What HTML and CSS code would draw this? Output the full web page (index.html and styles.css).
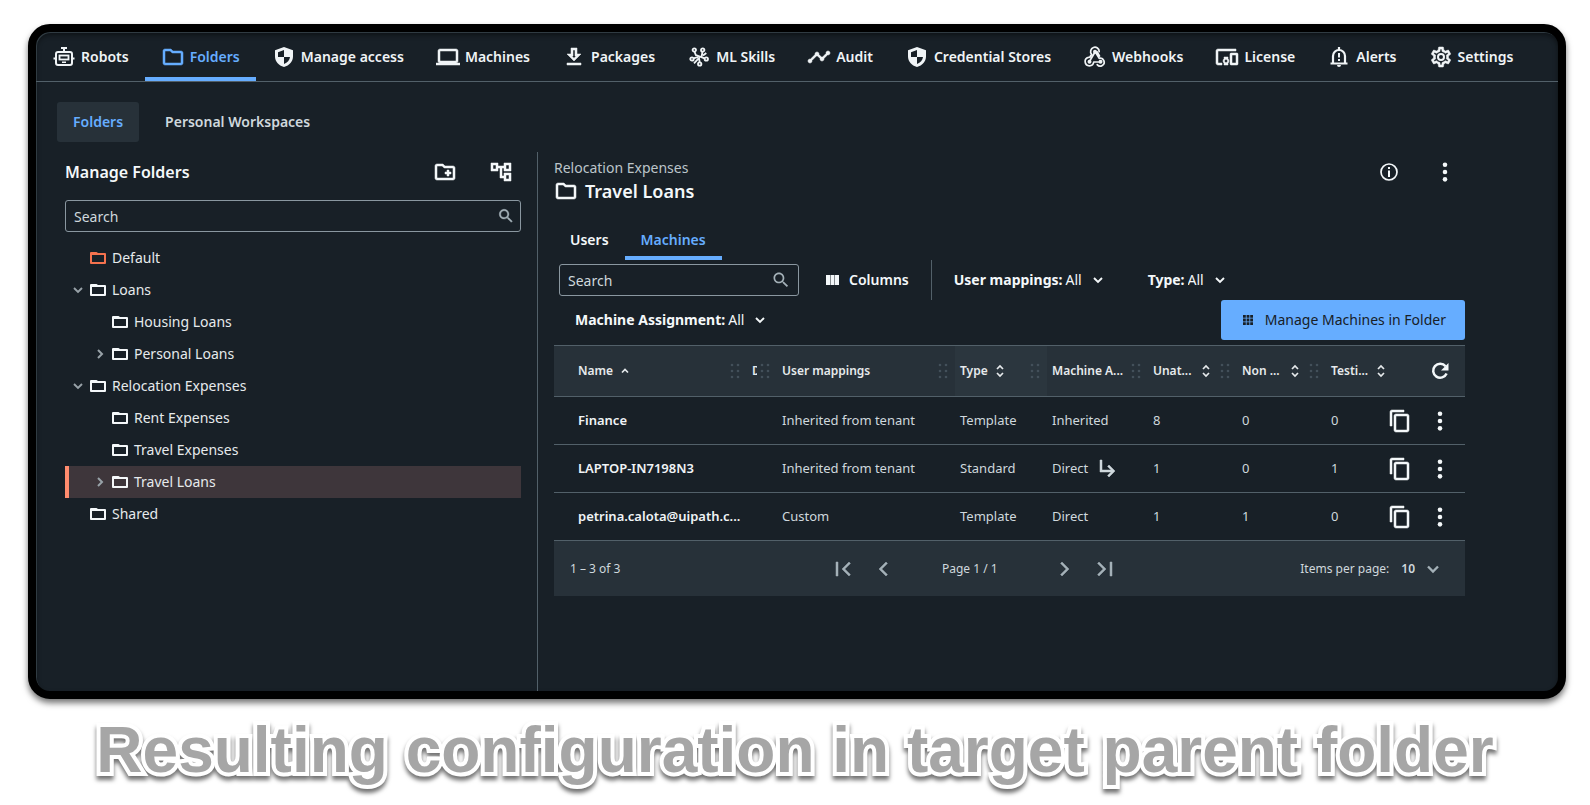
FILE: index.html
```
<!DOCTYPE html>
<html lang="en">
<head>
<meta charset="utf-8">
<title>Folders</title>
<link rel="stylesheet" href="styles.css">
</head>
<body>
<svg class="sprite" aria-hidden="true">
  <symbol id="robot" viewBox="0 0 24 24"><g fill="none" stroke="currentColor" stroke-width="2"><path d="M9 3h6M12 3v4"/><rect x="4" y="7" width="16" height="13" rx="2"/><path d="M1.500 13.500H4M20 13.500h2.500"/><rect x="7.500" y="10.500" width="9" height="4" stroke-width="1.800"/></g><path d="M10 16.500h4V18h-4z" fill="currentColor"/></symbol>
  <symbol id="folder" viewBox="0 0 24 24"><path fill="currentColor" d="M9.170 6l2 2H20v10H4V6h5.170M10 4H4c-1.100 0-1.990.9-1.990 2L2 18c0 1.100.9 2 2 2h16c1.100 0 2-.9 2-2V8c0-1.100-.9-2-2-2h-8l-2-2z"/></symbol>
  <symbol id="folder-small" viewBox="0 0 16 12"><path fill="currentColor" fill-rule="evenodd" d="M0 1a1 1 0 0 1 1-1h5.500l1.500 1h7a1 1 0 0 1 1 1V11a1 1 0 0 1-1 1H1a1 1 0 0 1-1-1zM2 3v7h12V3z"/></symbol>
  <symbol id="shield" viewBox="0 0 24 24"><path fill="currentColor" fill-rule="evenodd" d="M12 2l9 3.200v6.300c0 5-3.600 9-9 10.500-5.400-1.500-9-5.500-9-10.500V5.200zM12 5L6 7.200V12h6zM12 12v7c3.500-1.300 5.600-3.800 6-7z"/></symbol>
  <symbol id="laptop" viewBox="0 0 24 24"><path fill="currentColor" d="M20 18c1.100 0 1.990-.9 1.990-2L22 6c0-1.100-.9-2-2-2H4c-1.100 0-2 .9-2 2v10c0 1.100.9 2 2 2H0v2h24v-2h-4zM4 6h16v10H4V6z"/></symbol>
  <symbol id="download" viewBox="0 0 24 24"><path fill="currentColor" d="M19 9h-4V3H9v6H5l7 7 7-7zm-8 2V5h2v6h1.170L12 13.170 9.830 11H11zm-6 7h14v2H5z"/></symbol>
  <symbol id="skills" viewBox="0 0 24 24"><g fill="none" stroke="currentColor" stroke-width="1.800"><circle cx="7.300" cy="5" r="1.700"/><circle cx="15.700" cy="5" r="1.700"/><circle cx="5" cy="14" r="1.700"/><circle cx="19.300" cy="14" r="1.700"/><circle cx="12.700" cy="19" r="1.700"/><path d="M7.500 6.600l1.300 3.400 8.800 3.400M15.500 6.700l-1 5.300M6.600 13.400l4.400-1.600M12.700 17.300l-.7-4.300-5 5.300M19.300 8l-3.300 2.500"/></g></symbol>
  <symbol id="timeline" viewBox="0 0 24 24"><path fill="currentColor" d="M23 8c0 1.100-.9 2-2 2-.18 0-.35-.02-.51-.07l-3.560 3.550c.05.16.07.34.07.52 0 1.100-.9 2-2 2s-2-.9-2-2c0-.18.02-.36.07-.52l-2.550-2.550c-.16.05-.34.07-.52.07s-.36-.02-.52-.07l-4.550 4.560c.05.16.07.33.07.51 0 1.100-.9 2-2 2s-2-.9-2-2 .9-2 2-2c.18 0 .35.02.51.07l4.560-4.550C8.020 9.360 8 9.180 8 9c0-1.100.9-2 2-2s2 .9 2 2c0 .18-.02.36-.07.52l2.550 2.550c.16-.05.34-.07.52-.07s.36.02.52.07l3.550-3.560C19.020 8.350 19 8.180 19 8c0-1.100.9-2 2-2s2 .9 2 2z"/></symbol>
  <symbol id="webhook" viewBox="0 0 24 24"><g fill="none" stroke="currentColor" stroke-width="1.700" stroke-linecap="round" stroke-linejoin="round"><path d="M8.600 9.300a4.300 4.300 0 1 1 7.600-2.700M13 8l3.200 5.400a3.900 3.900 0 1 1-2 6.200M15.500 17H10.700a4.300 4.300 0 1 1-5.200-4.700M11.300 8.200l-4 6.800M8.600 9.300l-1.800 3M14 6.700l2.500 4.300"/></g><g fill="currentColor"><circle cx="12" cy="6.700" r="2"/><circle cx="6.500" cy="16.700" r="2"/><circle cx="17.500" cy="16.700" r="2"/></g></symbol>
  <symbol id="license" viewBox="0 0 24 24"><path fill="currentColor" d="M3 6h18V4H3c-1.100 0-2 .9-2 2v12c0 1.100.9 2 2 2h4v-2H3V6zm10 6H9v1.780c-.61.55-1 1.330-1 2.220s.39 1.670 1 2.220V20h4v-1.780c.61-.55 1-1.340 1-2.220s-.39-1.670-1-2.220V12zm-2 5.500c-.83 0-1.500-.67-1.500-1.500s.67-1.500 1.500-1.500 1.500.67 1.500 1.500-.67 1.500-1.500 1.500zM22 8h-6c-.5 0-1 .5-1 1v10c0 .5.5 1 1 1h6c.5 0 1-.5 1-1V9c0-.5-.5-1-1-1zm-1 10h-4v-8h4v8z"/></symbol>
  <symbol id="bell" viewBox="0 0 24 24"><path d="M6 18v-7a6 6 0 0 1 12 0v7M3.500 18.500h17M12 2v3" fill="none" stroke="currentColor" stroke-width="2.200"/><path fill="currentColor" d="M10 20h4a2 2 0 0 1-4 0zM11 8h2v4.500h-2zM11 14h2v2h-2z"/></symbol>
  <symbol id="gear" viewBox="0 0 24 24"><path fill="currentColor" d="M19.430 12.980c.04-.32.07-.64.07-.98 0-.34-.03-.66-.07-.98l2.110-1.650c.19-.15.24-.42.12-.64l-2-3.460c-.09-.16-.26-.25-.44-.25-.06 0-.12.01-.17.03l-2.490 1c-.52-.4-1.080-.73-1.690-.98l-.38-2.650C14.460 2.180 14.250 2 14 2h-4c-.25 0-.46.18-.49.42l-.38 2.650c-.61.25-1.170.59-1.690.98l-2.490-1c-.06-.02-.12-.03-.18-.03-.17 0-.34.09-.43.25l-2 3.460c-.13.22-.07.49.12.64l2.110 1.650c-.04.32-.07.65-.07.98 0 .33.03.66.07.98l-2.110 1.650c-.19.15-.24.42-.12.64l2 3.460c.09.16.26.25.44.25.06 0 .12-.01.17-.03l2.490-1c.52.4 1.080.73 1.690.98l.38 2.650c.03.24.24.42.49.42h4c.25 0 .46-.18.49-.42l.38-2.650c.61-.25 1.170-.59 1.690-.98l2.490 1c.06.02.12.03.18.03.17 0 .34-.09.43-.25l2-3.460c.12-.22.07-.49-.12-.64l-2.110-1.650zm-1.980-1.710c.04.31.05.52.05.73 0 .21-.02.43-.05.73l-.14 1.130.89.7 1.080.84-.7 1.210-1.270-.51-1.040-.42-.9.68c-.43.32-.84.56-1.250.73l-1.060.43-.16 1.130-.2 1.350h-1.400l-.19-1.350-.16-1.130-1.060-.43c-.43-.18-.83-.41-1.230-.71l-.91-.7-1.060.43-1.270.51-.7-1.210 1.080-.84.89-.7-.14-1.130c-.03-.31-.05-.54-.05-.74s.02-.43.05-.73l.14-1.130-.89-.7-1.080-.84.7-1.210 1.270.51 1.040.42.9-.68c.43-.32.84-.56 1.250-.73l1.060-.43.16-1.130.2-1.350h1.390l.19 1.350.16 1.130 1.060.43c.43.18.83.41 1.230.71l.91.7 1.060-.43 1.270-.51.7 1.210-1.070.85-.89.7.14 1.130z"/><circle cx="12" cy="12" r="3" fill="none" stroke="currentColor" stroke-width="2"/></symbol>
  <symbol id="new-folder" viewBox="0 0 24 24"><path fill="currentColor" d="M20 6h-8l-2-2H4c-1.110 0-1.990.89-1.990 2L2 18c0 1.110.89 2 2 2h16c1.110 0 2-.89 2-2V8c0-1.110-.89-2-2-2zm0 12H4V6h5.170l2 2H20v10zm-8-4h2v2h2v-2h2v-2h-2v-2h-2v2h-2v2z"/></symbol>
  <symbol id="tree" viewBox="0 0 24 24"><path fill="currentColor" d="M22 11V3h-7v3H9V3H2v8h7V8h2v10h4v3h7v-8h-7v3h-2V8h2v3h7zM7 9H4V5h3v4zm10 6h3v4h-3v-4zm0-10h3v4h-3V5z"/></symbol>
  <symbol id="search" viewBox="0 0 24 24"><path fill="currentColor" d="M15.500 14h-.79l-.28-.27C15.410 12.590 16 11.110 16 9.500 16 5.910 13.090 3 9.500 3S3 5.910 3 9.500 5.910 16 9.500 16c1.610 0 3.090-.59 4.230-1.570l.27.28v.79l5 4.990L20.490 19l-4.990-5zm-6 0C7.010 14 5 11.990 5 9.500S7.010 5 9.500 5 14 7.010 14 9.500 11.990 14 9.500 14z"/></symbol>
  <symbol id="down" viewBox="0 0 16 16"><path d="M4 6l4 4 4-4" fill="none" stroke="currentColor" stroke-width="1.900"/></symbol>
  <symbol id="right" viewBox="0 0 16 16"><path d="M6 4l4 4-4 4" fill="none" stroke="currentColor" stroke-width="2"/></symbol>
  <symbol id="up" viewBox="0 0 16 16"><path d="M5 9.500l3-3 3 3" fill="none" stroke="currentColor" stroke-width="1.700"/></symbol>
  <symbol id="sort" viewBox="0 0 16 16"><path d="M5 6l3-3 3 3M5 10l3 3 3-3" fill="none" stroke="currentColor" stroke-width="1.700"/></symbol>
  <symbol id="grip" viewBox="0 0 12 16"><g fill="currentColor"><circle cx="3" cy="2" r="1.300"/><circle cx="9" cy="2" r="1.300"/><circle cx="3" cy="8" r="1.300"/><circle cx="9" cy="8" r="1.300"/><circle cx="3" cy="14" r="1.300"/><circle cx="9" cy="14" r="1.300"/></g></symbol>
  <symbol id="info" viewBox="0 0 24 24"><circle cx="12" cy="12" r="8" fill="none" stroke="currentColor" stroke-width="1.700"/><path fill="currentColor" d="M11 7h2v2h-2zM11 10.500h2V17h-2z"/></symbol>
  <symbol id="more" viewBox="0 0 24 24"><g fill="currentColor"><circle cx="12" cy="4" r="2.500"/><circle cx="12" cy="12" r="2.500"/><circle cx="12" cy="20" r="2.500"/></g></symbol>
  <symbol id="columns" viewBox="0 0 16 16"><path fill="currentColor" d="M1 3h4v10H1zM5.500 3h4v10h-4zM10 3h4v10h-4z"/></symbol>
  <symbol id="apps" viewBox="0 0 16 16"><path fill="currentColor" d="M3 3h2.800v2.800H3zM6.600 3h2.800v2.800H6.600zM10.200 3H13v2.800h-2.800zM3 6.600h2.800v2.800H3zM6.600 6.600h2.800v2.800H6.600zM10.200 6.600H13v2.800h-2.800zM3 10.200h2.800V13H3zM6.600 10.200h2.800V13H6.600zM10.200 10.200H13V13h-2.800z"/></symbol>
  <symbol id="refresh" viewBox="0 0 24 24"><path fill="none" stroke="currentColor" stroke-width="2.500" d="M18.600 14.500a7 7 0 1 1-1-7.200"/><path fill="currentColor" d="M20.500 4v7.500H13z"/></symbol>
  <symbol id="copy" viewBox="0 0 24 24"><path fill="currentColor" d="M16 1H4c-1.100 0-2 .9-2 2v14h2V3h12V1zm3 4H8c-1.100 0-2 .9-2 2v14c0 1.100.9 2 2 2h11c1.100 0 2-.9 2-2V7c0-1.100-.9-2-2-2zm0 16H8V7h11v14z"/></symbol>
  <symbol id="subdir" viewBox="0 0 24 24"><path fill="currentColor" d="M19 15l-6 6-1.420-1.420L15.170 16H4V4h2v10h9.170l-3.590-3.580L13 9l6 6z"/></symbol>
  <symbol id="first" viewBox="0 0 24 24"><path fill="currentColor" d="M18.410 17.590L12.820 12l5.590-5.590L17 5l-7 7 7 7zM4 5h2v14H4z"/></symbol>
  <symbol id="prev" viewBox="0 0 24 24"><path fill="currentColor" d="M16.410 6.410L15 5l-7 7 7 7 1.410-1.410L10.830 12z"/></symbol>
  <symbol id="next" viewBox="0 0 24 24"><path fill="currentColor" d="M7.590 6.410L9 5l7 7-7 7-1.410-1.410L13.170 12z"/></symbol>
  <symbol id="last" viewBox="0 0 24 24"><path fill="currentColor" d="M5.590 6.410L11.180 12l-5.590 5.590L7 19l7-7-7-7zM18 5h2v14h-2z"/></symbol>
</svg>

<main class="frame">
  <nav class="nav" aria-label="Tenant">
    <a href="#"><svg class="icon"><use href="#robot"/></svg>Robots</a>
    <a href="#" class="active"><svg class="icon heavy"><use href="#folder"/></svg>Folders</a>
    <a href="#"><svg class="icon"><use href="#shield"/></svg>Manage access</a>
    <a href="#"><svg class="icon heavy"><use href="#laptop"/></svg>Machines</a>
    <a href="#"><svg class="icon heavy"><use href="#download"/></svg>Packages</a>
    <a href="#"><svg class="icon"><use href="#skills"/></svg>ML Skills</a>
    <a href="#"><svg class="icon heavy"><use href="#timeline"/></svg>Audit</a>
    <a href="#"><svg class="icon"><use href="#shield"/></svg>Credential Stores</a>
    <a href="#"><svg class="icon"><use href="#webhook"/></svg>Webhooks</a>
    <a href="#"><svg class="icon heavy"><use href="#license"/></svg>License</a>
    <a href="#"><svg class="icon"><use href="#bell"/></svg>Alerts</a>
    <a href="#"><svg class="icon heavy"><use href="#gear"/></svg>Settings</a>
  </nav>

  <div class="subnav">
    <button class="pill selected" type="button">Folders</button>
    <button class="pill" type="button">Personal Workspaces</button>
  </div>

  <div class="workspace">
    <aside class="sidebar">
      <header class="sidebar-head">
        <h2>Manage Folders</h2>
        <button class="icon-button" type="button" aria-label="New folder"><svg class="icon heavy"><use href="#new-folder"/></svg></button>
        <button class="icon-button" type="button" aria-label="Expand tree"><svg class="icon heavy"><use href="#tree"/></svg></button>
      </header>
      <div class="search">
        <input type="text" placeholder="Search" aria-label="Search folders">
        <svg class="search-icon small heavy"><use href="#search"/></svg>
      </div>
      <ul class="tree">
        <li class="node default"><span class="toggle"></span><svg class="folder"><use href="#folder-small"/></svg>Default</li>
        <li class="node"><button class="toggle" type="button" aria-label="Collapse Loans"><svg><use href="#down"/></svg></button><svg class="folder"><use href="#folder-small"/></svg>Loans</li>
        <li class="node child"><span class="toggle"></span><svg class="folder"><use href="#folder-small"/></svg>Housing Loans</li>
        <li class="node child"><button class="toggle" type="button" aria-label="Expand Personal Loans"><svg><use href="#right"/></svg></button><svg class="folder"><use href="#folder-small"/></svg>Personal Loans</li>
        <li class="node"><button class="toggle" type="button" aria-label="Collapse Relocation Expenses"><svg><use href="#down"/></svg></button><svg class="folder"><use href="#folder-small"/></svg>Relocation Expenses</li>
        <li class="node child"><span class="toggle"></span><svg class="folder"><use href="#folder-small"/></svg>Rent Expenses</li>
        <li class="node child"><span class="toggle"></span><svg class="folder"><use href="#folder-small"/></svg>Travel Expenses</li>
        <li class="node child current"><button class="toggle" type="button" aria-label="Expand Travel Loans"><svg><use href="#right"/></svg></button><svg class="folder"><use href="#folder-small"/></svg>Travel Loans</li>
        <li class="node"><span class="toggle"></span><svg class="folder"><use href="#folder-small"/></svg>Shared</li>
      </ul>
    </aside>

    <section class="detail">
      <header class="detail-head">
        <div class="detail-title">
          <p class="crumb">Relocation Expenses</p>
          <h1><svg class="icon heavy"><use href="#folder"/></svg>Travel Loans</h1>
        </div>
        <button class="icon-button" type="button" aria-label="Info"><svg class="icon"><use href="#info"/></svg></button>
        <button class="icon-button" type="button" aria-label="More actions"><svg class="icon dots"><use href="#more"/></svg></button>
      </header>

      <div class="tabs">
        <button class="tab" type="button">Users</button>
        <button class="tab active" type="button">Machines</button>
      </div>

      <div class="toolbar">
        <div class="search">
          <input type="text" placeholder="Search" aria-label="Search machines">
          <svg class="search-icon"><use href="#search"/></svg>
        </div>
        <button class="columns" type="button"><svg class="icon16"><use href="#columns"/></svg>Columns</button>
        <span class="separator"></span>
        <div class="filter"><label for="mappings">User mappings:</label><select id="mappings"><option>All</option></select><svg class="icon16"><use href="#down"/></svg></div>
        <div class="filter"><label for="type">Type:</label><select id="type"><option>All</option></select><svg class="icon16"><use href="#down"/></svg></div>
        <div class="filter"><label for="assignment">Machine Assignment:</label><select id="assignment"><option>All</option></select><svg class="icon16"><use href="#down"/></svg></div>
        <button class="primary" type="button"><svg class="icon16"><use href="#apps"/></svg>Manage Machines in Folder</button>
      </div>

      <table class="grid">
        <colgroup><col class="c-name"><col class="c-desc"><col><col class="c-type"><col class="c-assign"><col class="c-num"><col class="c-num"><col class="c-test"><col class="c-act"></colgroup>
        <thead>
          <tr>
            <th><div class="head"><span>Name</span><svg class="icon16"><use href="#up"/></svg><svg class="grip"><use href="#grip"/></svg></div></th>
            <th><div class="head"><span class="clip">D</span><svg class="grip"><use href="#grip"/></svg></div></th>
            <th><div class="head"><span>User mappings</span><svg class="grip"><use href="#grip"/></svg></div></th>
            <th class="hovered"><div class="head"><span>Type</span><svg class="icon16"><use href="#sort"/></svg><svg class="grip"><use href="#grip"/></svg></div></th>
            <th><div class="head"><span>Machine A...</span><svg class="grip"><use href="#grip"/></svg></div></th>
            <th><div class="head counted"><span>Unat...</span><svg class="icon16"><use href="#sort"/></svg><svg class="grip"><use href="#grip"/></svg></div></th>
            <th><div class="head counted"><span>Non ...</span><svg class="icon16"><use href="#sort"/></svg><svg class="grip"><use href="#grip"/></svg></div></th>
            <th><div class="head counted"><span>Testi...</span><svg class="icon16"><use href="#sort"/></svg></div></th>
            <th><div class="actions"><button class="icon-button" type="button" aria-label="Refresh"><svg class="icon"><use href="#refresh"/></svg></button></div></th>
          </tr>
        </thead>
        <tbody>
          <tr><td>Finance</td><td></td><td>Inherited from tenant</td><td>Template</td><td>Inherited</td><td>8</td><td>0</td><td>0</td>
            <td><div class="actions"><button class="icon-button" type="button" aria-label="Copy"><svg class="icon heavy"><use href="#copy"/></svg></button><button class="icon-button" type="button" aria-label="More"><svg class="icon dots"><use href="#more"/></svg></button></div></td></tr>
          <tr><td>LAPTOP-IN7198N3</td><td></td><td>Inherited from tenant</td><td>Standard</td><td><div class="direct">Direct<svg class="icon heavy"><use href="#subdir"/></svg></div></td><td>1</td><td>0</td><td>1</td>
            <td><div class="actions"><button class="icon-button" type="button" aria-label="Copy"><svg class="icon heavy"><use href="#copy"/></svg></button><button class="icon-button" type="button" aria-label="More"><svg class="icon dots"><use href="#more"/></svg></button></div></td></tr>
          <tr><td>petrina.calota@uipath.c...</td><td></td><td>Custom</td><td>Template</td><td>Direct</td><td>1</td><td>1</td><td>0</td>
            <td><div class="actions"><button class="icon-button" type="button" aria-label="Copy"><svg class="icon heavy"><use href="#copy"/></svg></button><button class="icon-button" type="button" aria-label="More"><svg class="icon dots"><use href="#more"/></svg></button></div></td></tr>
        </tbody>
      </table>
      <footer class="pager">
        <span>1 – 3 of 3</span>
        <div class="pages">
          <button class="icon-button" type="button" aria-label="First page"><svg class="icon heavy"><use href="#first"/></svg></button>
          <button class="icon-button" type="button" aria-label="Previous page"><svg class="icon heavy"><use href="#prev"/></svg></button>
          <span class="page">Page 1 / 1</span>
          <button class="icon-button" type="button" aria-label="Next page"><svg class="icon heavy"><use href="#next"/></svg></button>
          <button class="icon-button" type="button" aria-label="Last page"><svg class="icon heavy"><use href="#last"/></svg></button>
        </div>
        <div class="per-page"><label for="size">Items per page:</label><select id="size"><option>10</option></select><svg class="icon20"><use href="#down"/></svg></div>
      </footer>
    </section>
  </div>
</main>
<p class="caption">Resulting configuration in target parent folder</p>
</body>
</html>
```
FILE: styles.css
```
* { box-sizing: border-box; }
body {
  margin: 0;
  min-height: 100vh;
  display: flex;
  flex-direction: column;
  background: #fff;
  color: #cfd8dd;
  font: 14px/20px "Noto Sans", sans-serif;
}
button, input, select { font: inherit; color: inherit; }
button { border: 0; padding: 0; background: none; }
h1, h2, p, ul { margin: 0; padding: 0; }
svg { display: block; flex: none; }
.sprite { position: absolute; width: 0; height: 0; }
.icon { width: 24px; height: 24px; }
.icon16 { width: 16px; height: 16px; }
.icon20 { width: 20px; height: 20px; color: #a4b1b8; }
.heavy { stroke: currentColor; stroke-width: .5; }
.icon-button { color: #f4f8fa; }
.dots { padding: 1px; }

.frame {
  flex: 1;
  display: flex;
  flex-direction: column;
  margin: 24px 24px 0 28px;
  border: 8px solid #000;
  border-radius: 22px;
  background: #182027;
  box-shadow: 0 4px 6px rgba(0, 0, 0, .55), inset 1px 1px 0 #303b42, inset 0 3px 5px rgba(0, 0, 0, .45);
}
.nav { display: flex; height: 50px; border-bottom: 1px solid #526069; }
.nav a {
  display: flex;
  align-items: center;
  gap: 5px;
  padding: 0 16px;
  color: #f0f4f6;
  font-weight: 600;
  text-decoration: none;
  white-space: nowrap;
}
.nav a.active { color: #66adff; box-shadow: inset 0 -4px #66adff; }

.subnav { display: flex; gap: 10px; padding: 20px 21px 10px; }
.pill { height: 40px; padding: 0 16px; border-radius: 3px; font-weight: 600; }
.pill.selected { background: #273139; color: #66adff; }

.workspace { flex: 1; display: flex; }
.sidebar { flex: none; width: 502px; padding: 0 16px 0 29px; border-right: 1px solid #526069; }
.sidebar-head { display: flex; align-items: center; gap: 32px; height: 40px; margin-bottom: 8px; padding-right: 8px; }
h2 { flex: 1; color: #f4f8fa; font-size: 16px; font-weight: 600; }
.search { position: relative; }
.search input {
  display: block;
  width: 100%;
  height: 32px;
  padding: 0 8px;
  border: 1px solid #8a97a0;
  border-radius: 3px;
  background: transparent;
}
.search input::placeholder { color: #cfd8dd; opacity: 1; }
.search-icon { position: absolute; right: 8px; top: 6px; width: 20px; height: 20px; color: #a4b1b8; }
.search-icon.small { right: 6px; top: 7px; width: 18px; height: 18px; }

.tree { margin-top: 10px; list-style: none; }
.node { display: flex; align-items: center; height: 32px; padding-left: 5px; color: #e6eaec; }
.node.child { padding-left: 27px; }
.node.current { background: #3e363b; box-shadow: inset 4px 0 #ff8c6e; }
.toggle { width: 16px; height: 16px; margin-right: 4px; color: #98a2a8; }
.toggle svg { width: 16px; height: 16px; }
.folder { width: 16px; height: 12px; margin-right: 6px; color: #f4f8fa; }
.default .folder { color: #f4724e; }

.detail { flex: 1; min-width: 0; padding: 0 93px 0 16px; }
.detail-head { display: flex; align-items: center; gap: 32px; height: 40px; padding-right: 8px; }
.detail-title { flex: 1; padding-top: 18px; }
.crumb { color: #bcc5ca; }
h1 { display: flex; align-items: center; gap: 7px; color: #f4f8fa; font-size: 18px; line-height: 26px; font-weight: 600; }

.tabs { display: flex; margin-top: 28px; }
.tab { height: 40px; padding: 0 16px; color: #f4f8fa; font-weight: 600; }
.tab.active { color: #66adff; box-shadow: inset 0 -4px #66adff; }

.toolbar { display: flex; flex-wrap: wrap; align-items: center; gap: 0 10px; padding-left: 5px; margin-bottom: 5px; color: #f4f8fa; }
.toolbar .search { width: 240px; color: #cfd8dd; }
.columns { display: flex; align-items: center; gap: 8px; height: 40px; padding: 0 16px; font-weight: 600; }
.separator { width: 1px; height: 40px; margin: 0 -4px; background: #526069; }
.filter { display: flex; align-items: center; gap: 3px; height: 40px; padding: 0 16px; }
.filter label { font-weight: 700; }
.filter select, .per-page select { appearance: none; field-sizing: content; border: 0; padding: 0; background: transparent; }
.filter .icon16 { margin-left: 5px; }
.primary {
  display: flex;
  align-items: center;
  gap: 9px;
  height: 40px;
  margin-left: auto;
  padding: 0 19px;
  border-radius: 3px;
  background: #66adff;
  color: #182027;
}

.grid { width: 100%; table-layout: fixed; border-collapse: collapse; }
.c-name { width: 193px; }
.c-desc { width: 30px; }
.c-type { width: 92px; }
.c-assign { width: 101px; }
.c-num { width: 89px; }
.c-test { width: 63px; }
.c-act { width: 76px; }
.grid th { height: 51px; padding: 0 0 0 5px; border-top: 1px solid #526069; background: #273139; color: #e6eaec; font-size: 12px; font-weight: 600; text-align: left; }
.grid th.hovered { background: #2b363e; }
.grid td { height: 48px; padding: 0 0 2px 5px; font-size: 13px; white-space: nowrap; }
.grid td:last-child { padding-bottom: 0; }
.grid tr { border-bottom: 1px solid #526069; }
.grid th:first-child, .grid td:first-child { padding-left: 24px; }
.grid td:first-child { color: #f0f4f6; font-weight: 600; }
.head { display: flex; align-items: center; gap: 4px; white-space: nowrap; }
.grip { width: 12px; height: 16px; margin: 0 6px 0 auto; color: #43505a; }
.clip { width: 5px; overflow: hidden; }
.head:has(.clip) { gap: 0; }
.counted span { width: 41px; }
.actions { display: flex; align-items: center; justify-content: flex-end; gap: 16px; padding-right: 13px; }
.direct { display: flex; align-items: center; gap: 8px; }

.pager { display: grid; grid-template-columns: 4fr auto 5fr; align-items: center; height: 55px; padding: 0 22px 0 16px; background: #273139; font-size: 12px; }
.pages { display: flex; align-items: center; gap: 15px; }
.pages .icon-button { color: #a4b1b8; }
.page { margin: 0 40px 0 32px; }
.per-page { display: flex; align-items: center; justify-content: flex-end; gap: 8px; }
.per-page label { margin-right: 4px; }
.per-page select { font-weight: 600; }

.caption {
  height: 106px;
  padding-top: 13px;
  color: #a6a6a6;
  font: bold 64px/76px "Liberation Sans", Arial, sans-serif;
  text-align: center;
  white-space: nowrap;
  -webkit-text-stroke: 8px #fff;
  paint-order: stroke fill;
  filter: drop-shadow(0 4px 2px rgba(0, 0, 0, .55));
}
```
